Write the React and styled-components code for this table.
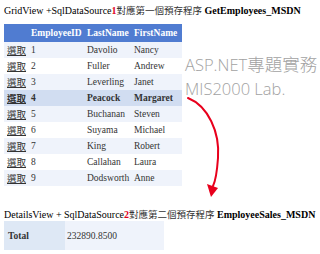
import styled, { createGlobalStyle } from "styled-components";

const GlobalStyle = createGlobalStyle`
  body {
    margin: 0;
    background: #ffffff;
  }
`;

const Page = styled.div`
  position: relative;
  width: 320px;
  height: 254px;
  padding: 4px;
  box-sizing: border-box;
  overflow: hidden;
  font-family: "Liberation Serif", "Noto Sans CJK TC", serif;
  color: #000;
`;

const Heading = styled.p`
  margin: ${(p) => p.$top}px 0 0;
  font-size: 10px;
  line-height: 12px;
  white-space: nowrap;

  b {
    font-weight: bold;
  }
`;

const Num = styled.b`
  color: #e0001b;
`;

const Cjk = styled.span`
  font-family: "Noto Sans CJK TC", sans-serif;
  font-size: 9.5px;
  color: #333;
`;

const Grid = styled.table`
  margin-top: 7px;
  width: 178px;
  border-collapse: collapse;
  table-layout: fixed;
  font-size: 9.5px;
  color: #333333;
`;

const HeadRow = styled.tr`
  height: 18px;
  background: #507cd1;
  color: #ffffff;

  th {
    text-align: left;
    font-weight: bold;
    padding: 0 3px;
    white-space: nowrap;
  }
`;

const rowBg = { odd: "#eff3fb", even: "#ffffff", sel: "#d1ddf1" };

const Row = styled.tr`
  height: 16px;
  background: ${(p) => rowBg[p.$kind]};
  font-weight: ${(p) => (p.$kind === "sel" ? "bold" : "normal")};

  td {
    padding: 0 3px;
    white-space: nowrap;
  }
`;

const Select = styled.a`
  font-family: "Noto Sans CJK TC", sans-serif;
  font-size: 9.5px;
  color: #333333;
  text-decoration: underline;
`;

const Details = styled.table`
  margin-top: 0;
  width: 160px;
  border-collapse: collapse;
  table-layout: fixed;
  font-size: 9.5px;
  color: #333333;

  tr {
    height: 29px;
  }
`;

const FieldHead = styled.td`
  width: 53px;
  background: #dee8f5;
  font-weight: bold;
  padding: 0 4px;
`;

const FieldValue = styled.td`
  background: #eff3fb;
  padding: 0 2px;
`;

const Watermark = styled.div`
  position: absolute;
  left: 185px;
  top: 52px;
  font-family: "Open Sans", sans-serif;
  font-weight: 300;
  font-size: 16.5px;
  line-height: 24px;
  color: #a2a2a2;
  white-space: nowrap;

  span {
    font-family: "Noto Sans CJK TC", sans-serif;
    font-weight: 300;
    font-size: 17.5px;
  }
`;

const Arrow = styled.svg`
  position: absolute;
  left: 180px;
  top: 92px;
`;

const employees = [
  [1, "Davolio", "Nancy"],
  [2, "Fuller", "Andrew"],
  [3, "Leverling", "Janet"],
  [4, "Peacock", "Margaret"],
  [5, "Buchanan", "Steven"],
  [6, "Suyama", "Michael"],
  [7, "King", "Robert"],
  [8, "Callahan", "Laura"],
  [9, "Dodsworth", "Anne"],
];

function App() {
  return (
    <Page>
      <GlobalStyle />
      <Heading $top={0}>
        GridView +SqlDataSource<Num>1</Num>
        <Cjk>對應第一個預存程序</Cjk> <b>GetEmployees_MSDN</b>
      </Heading>

      <Grid>
        <colgroup>
          <col style={{ width: 24 }} />
          <col style={{ width: 56 }} />
          <col style={{ width: 47 }} />
          <col style={{ width: 51 }} />
        </colgroup>
        <thead>
          <HeadRow>
            <th></th>
            <th>EmployeeID</th>
            <th>LastName</th>
            <th>FirstName</th>
          </HeadRow>
        </thead>
        <tbody>
          {employees.map(([id, last, first], i) => (
            <Row key={id} $kind={id === 4 ? "sel" : i % 2 === 0 ? "odd" : "even"}>
              <td>
                <Select href="#">選取</Select>
              </td>
              <td>{id}</td>
              <td>{last}</td>
              <td>{first}</td>
            </Row>
          ))}
        </tbody>
      </Grid>

      <Heading $top={22}>
        DetailsView + SqlDataSource<Num>2</Num>
        <Cjk>對應第二個預存程序</Cjk> <b>EmployeeSales_MSDN</b>
      </Heading>

      <Details>
        <tbody>
          <tr>
            <FieldHead>Total</FieldHead>
            <FieldValue>232890.8500</FieldValue>
          </tr>
        </tbody>
      </Details>

      <Watermark>
        ASP.NET<span>專題實務</span>
        <br />
        MIS2000 Lab.
      </Watermark>

      <Arrow width="50" height="112" viewBox="0 0 50 112">
        <path
          d="M8 6 C 28 14, 40 40, 38 66 C 37 80, 36 88, 33 94"
          fill="none"
          stroke="#e8001c"
          strokeWidth="2"
          strokeLinecap="round"
        />
        <polygon points="27,92 38,96 31,105" fill="#e8001c" />
      </Arrow>
    </Page>
  );
}

export default App;
